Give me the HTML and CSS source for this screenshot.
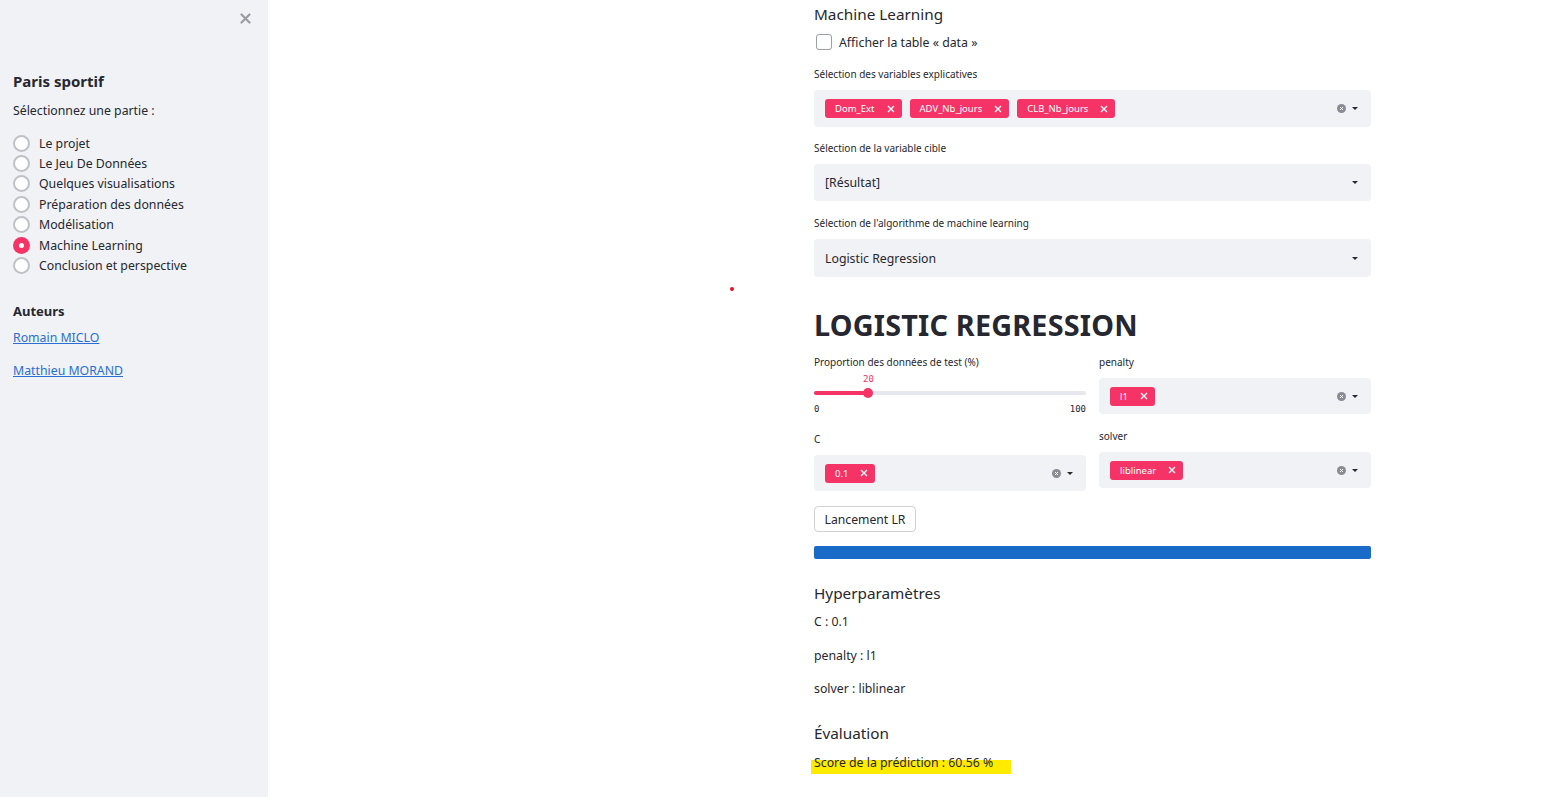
FILE: index.html
```html
<!DOCTYPE html>
<html lang="fr">
<head>
<meta charset="utf-8">
<title>Paris sportif</title>
<link rel="stylesheet" href="styles.css">
</head>
<body>
<aside class="sidebar">
  <div class="close-row">
    <svg class="close-icon" width="11" height="11" viewBox="0 0 11 11"><path d="M1.5 1.5 L9.5 9.5 M9.5 1.5 L1.5 9.5" stroke="#9a9ca3" stroke-width="2.2" stroke-linecap="round"/></svg>
  </div>
  <h2 class="side-title">Paris sportif</h2>
  <p class="side-label">Sélectionnez une partie :</p>
  <div class="radio-group">
    <div class="radio"><span class="radio-circle"></span><span>Le projet</span></div>
    <div class="radio"><span class="radio-circle"></span><span>Le Jeu De Données</span></div>
    <div class="radio"><span class="radio-circle"></span><span>Quelques visualisations</span></div>
    <div class="radio"><span class="radio-circle"></span><span>Préparation des données</span></div>
    <div class="radio"><span class="radio-circle"></span><span>Modélisation</span></div>
    <div class="radio"><span class="radio-circle checked"></span><span>Machine Learning</span></div>
    <div class="radio"><span class="radio-circle"></span><span>Conclusion et perspective</span></div>
  </div>
  <h3 class="side-sub">Auteurs</h3>
  <a class="side-link first" href="#">Romain MICLO</a>
  <a class="side-link second" href="#">Matthieu MORAND</a>
</aside>

<main class="main">
  <span class="stray-dot"></span>
  <div class="content">
    <h3 class="h3 title">Machine Learning</h3>
    <label class="checkbox-row"><span class="checkbox"></span><span>Afficher la table « data »</span></label>

    <div class="label l-first">Sélection des variables explicatives</div>
    <div class="select multi">
      <div class="tags">
        <span class="tag">Dom_Ext<svg class="tag-x" width="8" height="8" viewBox="0 0 8 8"><path d="M1 1 L7 7 M7 1 L1 7" stroke="#fff" stroke-width="1.3"/></svg></span>
        <span class="tag">ADV_Nb_jours<svg class="tag-x" width="8" height="8" viewBox="0 0 8 8"><path d="M1 1 L7 7 M7 1 L1 7" stroke="#fff" stroke-width="1.3"/></svg></span>
        <span class="tag">CLB_Nb_jours<svg class="tag-x" width="8" height="8" viewBox="0 0 8 8"><path d="M1 1 L7 7 M7 1 L1 7" stroke="#fff" stroke-width="1.3"/></svg></span>
      </div>
      <div class="controls"><span class="clear"><svg width="9" height="9" viewBox="0 0 9 9"><circle cx="4.5" cy="4.5" r="4.5" fill="#8a8c94"/><path d="M3 3 L6 6 M6 3 L3 6" stroke="#fff" stroke-width="1"/></svg></span><span class="caret"></span></div>
    </div>

    <div class="label l-second">Sélection de la variable cible</div>
    <div class="select single">
      <span class="value">[Résultat]</span>
      <div class="controls"><span class="caret"></span></div>
    </div>

    <div class="label l-third">Sélection de l'algorithme de machine learning</div>
    <div class="select single tall">
      <span class="value">Logistic Regression</span>
      <div class="controls"><span class="caret"></span></div>
    </div>

    <h1 class="h1">LOGISTIC REGRESSION</h1>

    <div class="columns">
      <div class="col">
        <div class="label nomargin">Proportion des données de test (%)</div>
        <div class="slider">
          <span class="slider-value" style="left: 20%">20</span>
          <div class="track"><div class="fill" style="width: 20%"></div><span class="thumb" style="left: 20%"></span></div>
          <div class="slider-range"><span>0</span><span>100</span></div>
        </div>
        <div class="label c-label">C</div>
        <div class="select multi short">
          <div class="tags"><span class="tag">0.1<svg class="tag-x" width="8" height="8" viewBox="0 0 8 8"><path d="M1 1 L7 7 M7 1 L1 7" stroke="#fff" stroke-width="1.3"/></svg></span></div>
          <div class="controls"><span class="clear"><svg width="9" height="9" viewBox="0 0 9 9"><circle cx="4.5" cy="4.5" r="4.5" fill="#8a8c94"/><path d="M3 3 L6 6 M6 3 L3 6" stroke="#fff" stroke-width="1"/></svg></span><span class="caret"></span></div>
        </div>
      </div>
      <div class="col">
        <div class="label nomargin">penalty</div>
        <div class="select multi short">
          <div class="tags"><span class="tag">l1<svg class="tag-x" width="8" height="8" viewBox="0 0 8 8"><path d="M1 1 L7 7 M7 1 L1 7" stroke="#fff" stroke-width="1.3"/></svg></span></div>
          <div class="controls"><span class="clear"><svg width="9" height="9" viewBox="0 0 9 9"><circle cx="4.5" cy="4.5" r="4.5" fill="#8a8c94"/><path d="M3 3 L6 6 M6 3 L3 6" stroke="#fff" stroke-width="1"/></svg></span><span class="caret"></span></div>
        </div>
        <div class="label solver-label">solver</div>
        <div class="select multi short">
          <div class="tags"><span class="tag">liblinear<svg class="tag-x" width="8" height="8" viewBox="0 0 8 8"><path d="M1 1 L7 7 M7 1 L1 7" stroke="#fff" stroke-width="1.3"/></svg></span></div>
          <div class="controls"><span class="clear"><svg width="9" height="9" viewBox="0 0 9 9"><circle cx="4.5" cy="4.5" r="4.5" fill="#8a8c94"/><path d="M3 3 L6 6 M6 3 L3 6" stroke="#fff" stroke-width="1"/></svg></span><span class="caret"></span></div>
        </div>
      </div>
    </div>

    <button class="button">Lancement LR</button>
    <div class="progress"></div>

    <h3 class="h3 hyper">Hyperparamètres</h3>
    <p class="text t1">C : 0.1</p>
    <p class="text t2">penalty : l1</p>
    <p class="text t3">solver : liblinear</p>

    <h3 class="h3 eval">Évaluation</h3>
    <p class="score"><span class="highlight">Score de la prédiction : 60.56 %</span></p>
  </div>
</main>
</body>
</html>
```

FILE: styles.css
```css
* { box-sizing: border-box; }

html, body {
  margin: 0;
  padding: 0;
  height: 100%;
}

body {
  display: flex;
  font-family: "Noto Sans", "Open Sans", sans-serif;
  color: #262730;
  background: #ffffff;
  overflow: hidden;
}

/* Sidebar */
.sidebar {
  width: 268px;
  flex: 0 0 268px;
  height: 797px;
  background: #f0f2f6;
  padding: 0 0 0 13px;
  display: flex;
  flex-direction: column;
  align-items: flex-start;
}

.close-row {
  width: 100%;
  display: flex;
  justify-content: flex-end;
  padding: 13px 17px 0 0;
  height: 24px;
}

.side-title {
  margin: 47px 0 0;
  font-size: 15px;
  line-height: 20px;
  font-weight: 700;
}

.side-label {
  margin: 11px 0 0;
  font-size: 12.3px;
  line-height: 18px;
}

.radio-group {
  margin-top: 13px;
  display: flex;
  flex-direction: column;
}

.radio {
  height: 20.4px;
  display: flex;
  align-items: center;
  font-size: 12.3px;
  gap: 9px;
}

.radio-circle {
  width: 17px;
  height: 17px;
  border-radius: 50%;
  border: 2px solid #bfc1c6;
  background: #ffffff;
  flex: 0 0 17px;
}

.radio-circle.checked {
  border: none;
  background: #f63366;
  position: relative;
}

.radio-circle.checked::after {
  content: "";
  position: absolute;
  left: 6px;
  top: 6px;
  width: 5px;
  height: 5px;
  border-radius: 50%;
  background: #ffffff;
}

.side-sub {
  margin: 26px 0 0;
  font-size: 13px;
  line-height: 18px;
  font-weight: 700;
}

.side-link {
  color: #2a6fd6;
  font-size: 12.3px;
  line-height: 18px;
  text-decoration: underline;
}

.side-link.first { margin-top: 9px; }
.side-link.second { margin-top: 15px; }

/* Main */
.main {
  flex: 1;
  position: relative;
  height: 797px;
  padding-left: 546px;
}

.stray-dot {
  position: absolute;
  left: 462px;
  top: 287px;
  width: 4px;
  height: 4px;
  border-radius: 50%;
  background: #e8121f;
}

.content {
  width: 557px;
  display: flex;
  flex-direction: column;
  align-items: flex-start;
}

.h3 {
  margin: 0;
  font-size: 15.3px;
  line-height: 20px;
  font-weight: 400;
}

.title { margin-top: 4px; }

.checkbox-row {
  margin-top: 8px;
  height: 20px;
  display: flex;
  align-items: center;
  gap: 7px;
  font-size: 12.3px;
  padding-left: 2px;
}

.checkbox {
  width: 16px;
  height: 16px;
  border: 1px solid #9c9ea6;
  border-radius: 3px;
  background: #fff;
}

.label {
  margin-top: 14px;
  font-size: 10px;
  line-height: 15px;
  height: 14px;
}

.label.l-first { margin-top: 15px; }
.label.l-second { margin-top: 14px; }
.label.l-third { margin-top: 15px; }
.label.nomargin { margin-top: 0; }

.select {
  margin-top: 9px;
  width: 100%;
  height: 37px;
  background: #f0f2f6;
  border-radius: 4px;
  display: flex;
  align-items: center;
  justify-content: space-between;
  padding: 0 13px 0 11px;
}

.select.tall { height: 38px; }
.select.short { height: 36px; }

.tags {
  display: flex;
  gap: 8px;
}

.tag {
  height: 19px;
  background: #f63366;
  color: #fff;
  border-radius: 3px;
  font-size: 9.5px;
  display: flex;
  align-items: center;
  padding: 0 7px 0 10px;
}

.tag-x {
  margin-left: 12px;
  display: block;
}

.controls {
  display: flex;
  align-items: center;
  gap: 6px;
}

.clear { display: flex; }

.caret {
  width: 0;
  height: 0;
  border-left: 3.5px solid transparent;
  border-right: 3.5px solid transparent;
  border-top: 3.5px solid #262730;
}

.value {
  font-size: 12.3px;
}

.h1 {
  margin: 30px 0 0;
  font-size: 28.8px;
  line-height: 36px;
  font-weight: 700;
  letter-spacing: 0.2px;
}

.columns {
  margin-top: 12px;
  width: 100%;
  display: grid;
  grid-template-columns: 1fr 1fr;
  gap: 13px;
}

.col {
  display: flex;
  flex-direction: column;
}

.slider {
  position: relative;
  height: 48px;
}

.slider-value {
  position: absolute;
  top: 4px;
  transform: translateX(-50%);
  font-family: "DejaVu Sans Mono", monospace;
  font-size: 9px;
  color: #f63366;
  line-height: 12px;
}

.track {
  position: absolute;
  left: 0;
  right: 0;
  top: 22px;
  height: 4px;
  border-radius: 2px;
  background: #e6e8ee;
}

.fill {
  height: 100%;
  background: #f63366;
  border-radius: 2px;
}

.thumb {
  position: absolute;
  top: -3px;
  width: 10px;
  height: 10px;
  margin-left: -5px;
  border-radius: 50%;
  background: #f63366;
}

.slider-range {
  position: absolute;
  left: 0;
  right: 0;
  top: 34px;
  display: flex;
  justify-content: space-between;
  font-family: "DejaVu Sans Mono", monospace;
  font-size: 9px;
  line-height: 12px;
}

.label.c-label { margin-top: 15px; }
.label.solver-label { margin-top: 15px; }

.button {
  margin-top: 15px;
  height: 26px;
  width: 102px;
  border: 1px solid #d0d1d5;
  border-radius: 4px;
  background: #fff;
  font-family: inherit;
  font-size: 12.2px;
  color: #262730;
  padding: 0;
}

.progress {
  margin-top: 14px;
  width: 100%;
  height: 13px;
  background: #1a6ac8;
  border-radius: 2px;
}

.hyper { margin-top: 24px; }

.text {
  margin: 0;
  font-size: 12.3px;
  line-height: 18px;
}

.t1 { margin-top: 10px; }
.t2 { margin-top: 16px; }
.t3 { margin-top: 15px; }

.eval { margin-top: 25px; }

.score {
  margin: 17px 0 0 -3px;
  font-size: 12.3px;
  line-height: 14px;
}

.highlight {
  display: inline-block;
  background: #ffeb00;
  line-height: 5px;
  height: 14px;
  padding: 0 18px 0 3px;
  vertical-align: top;
}
```
